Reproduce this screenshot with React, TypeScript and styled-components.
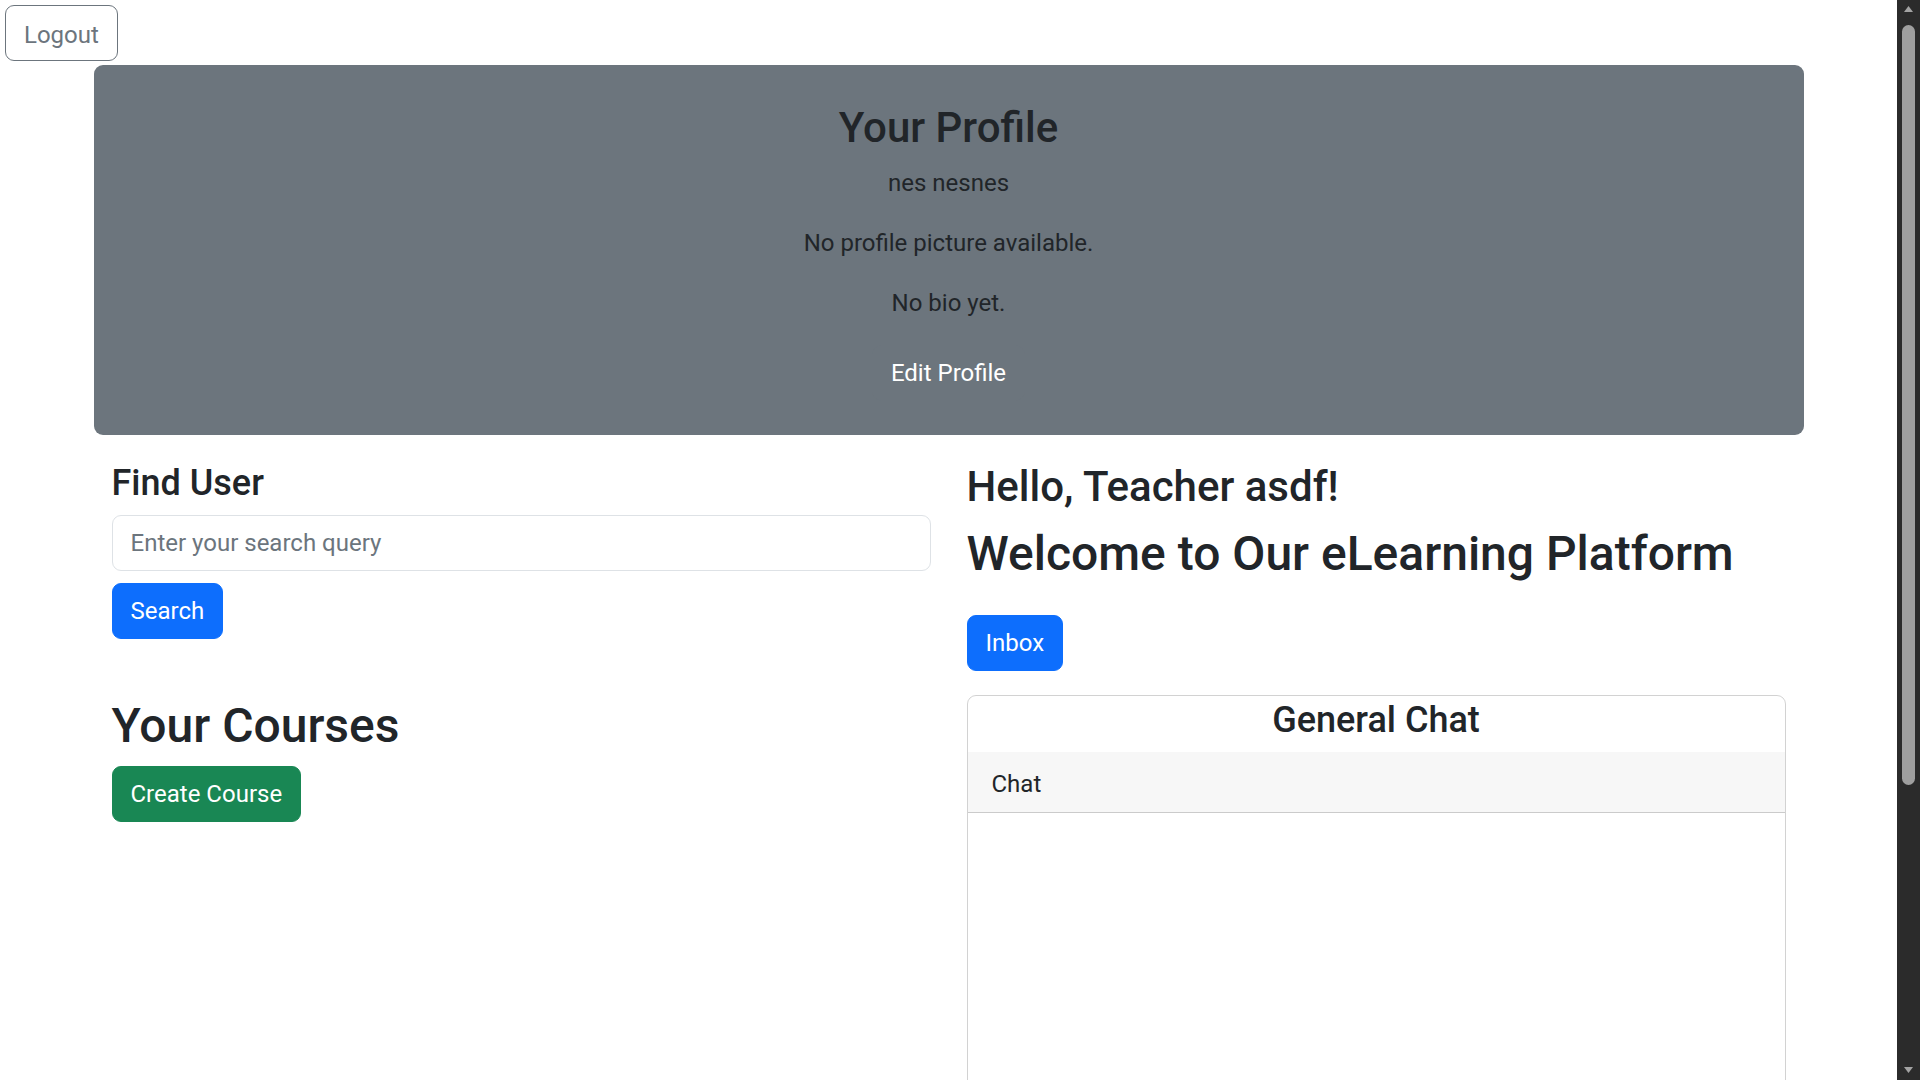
import React from 'react'
import styled, { createGlobalStyle, css } from 'styled-components'

const GlobalStyle = createGlobalStyle`
	* {
		box-sizing: border-box;
	}
	html, body {
		margin: 0;
		background: #fff;
	}
	body {
		font-family: "Segoe UI", Roboto, "Liberation Sans", Arial, sans-serif;
		font-size: 24px;
		line-height: 1.5;
		color: #212529;
	}
	::-webkit-scrollbar {
		display: none;
	}
`

const Page = styled.div`
	display: flex;
	flex-direction: column;
	width: calc(100% - 23px);
	padding-bottom: 12px;
`

const TopBar = styled.div`
	display: flex;
	padding: 5px 5px 4px;
`

const buttonBase = css`
	display: inline-flex;
	align-items: center;
	justify-content: center;
	font-family: inherit;
	font-size: 24px;
	line-height: 36px;
	padding: 9px 18px;
	border: 1px solid transparent;
	border-radius: 9px;
	cursor: pointer;
`

const OutlineButton = styled.button`
	${buttonBase};
	padding: 11px 18px 7px;
	background: transparent;
	color: #6c757d;
	border-color: #6c757d;
`

const Button = styled.button<{ $variant: 'primary' | 'success' | 'secondary' }>`
	${buttonBase};
	align-self: flex-start;
	color: #fff;
	background: ${(p) =>
		p.$variant === 'primary' ? '#0d6efd' : p.$variant === 'success' ? '#198754' : '#6c757d'};
	border-color: ${(p) =>
		p.$variant === 'primary' ? '#0d6efd' : p.$variant === 'success' ? '#198754' : '#6c757d'};
`

const ProfilePanel = styled.section`
	display: flex;
	flex-direction: column;
	align-items: center;
	width: 1710px;
	margin: 0 auto;
	padding: 38px 36px 34px;
	background: #6c757d;
	border-radius: 9px;
	text-align: center;
`

const Heading = styled.h2<{ $size: number; $gap?: number; $after?: number }>`
	margin: ${(p) => p.$gap ?? 0}px 0 ${(p) => p.$after ?? 12}px;
	font-size: ${(p) => p.$size}px;
	font-weight: 500;
	line-height: 1.2;
	color: #212529;
`

const InfoText = styled.p`
	margin: 0 0 24px;
`

const PanelButton = styled(Button)`
	align-self: center;
`

const Row = styled.div`
	display: grid;
	grid-template-columns: 1fr 1fr;
	column-gap: 36px;
	width: 1710px;
	margin: 27px auto 0;
	padding: 0 18px;
`

const Column = styled.div`
	display: flex;
	flex-direction: column;
	min-width: 0;
`

const SearchInput = styled.input`
	width: 100%;
	margin: 0 0 12px;
	padding: 9px 18px;
	font-family: inherit;
	font-size: 24px;
	line-height: 36px;
	color: #212529;
	background: #fff;
	border: 1px solid #dee2e6;
	border-radius: 9px;
	outline: none;

	&::placeholder {
		color: #6c757d;
	}
`

const InboxButton = styled(Button)`
	margin-top: 21px;
`

const ChatCard = styled.div`
	display: flex;
	flex-direction: column;
	margin-top: 24px;
	border: 1.5px solid rgba(0, 0, 0, 0.175);
	border-radius: 9px;
	overflow: hidden;
`

const CardTitle = styled(Heading)`
	text-align: center;
	padding-top: 3px;
	margin-bottom: 9px;
`

const CardHeader = styled.div`
	padding: 14px 24px 10px;
	background: #f7f7f7;
	border-bottom: 1.5px solid rgba(0, 0, 0, 0.175);
`

const CardBody = styled.div`
	height: 640px;
	padding: 24px;
`

/* drawn copy of the browser's dark scrollbar, fixed over the right edge */
const ScrollTrack = styled.div`
	position: fixed;
	top: 0;
	right: 0;
	width: 23px;
	height: 100vh;
	display: flex;
	flex-direction: column;
	align-items: center;
	background: #2b2b2b;
`

const ScrollArrow = styled.svg`
	flex: none;
	width: 23px;
	height: 22px;
`

const ScrollThumb = styled.div`
	width: 13px;
	height: 760px;
	margin-top: 3px;
	background: #9f9f9f;
	border-radius: 7px;
`

const Spacer = styled.div`
	flex: 1;
`

export default function App() {
	return (
		<Page>
			<GlobalStyle />
			<TopBar>
				<OutlineButton>Logout</OutlineButton>
			</TopBar>

			<ProfilePanel>
				<Heading as="h3" $size={42}>Your Profile</Heading>
				<InfoText>nes nesnes</InfoText>
				<InfoText>No profile picture available.</InfoText>
				<InfoText>No bio yet.</InfoText>
				<PanelButton $variant="secondary">Edit Profile</PanelButton>
			</ProfilePanel>

			<Row>
				<Column>
					<Heading as="h4" $size={36} $after={9}>Find User</Heading>
					<SearchInput placeholder="Enter your search query" />
					<Button $variant="primary">Search</Button>
					<Heading $size={48} $gap={58}>Your Courses</Heading>
					<Button $variant="success">Create Course</Button>
				</Column>

				<Column>
					<Heading as="h3" $size={42}>Hello, Teacher asdf!</Heading>
					<Heading $size={48}>Welcome to Our eLearning Platform</Heading>
					<InboxButton $variant="primary">Inbox</InboxButton>
					<ChatCard>
						<CardTitle as="h4" $size={36}>General Chat</CardTitle>
						<CardHeader>Chat</CardHeader>
						<CardBody />
					</ChatCard>
				</Column>
			</Row>

			<ScrollTrack>
				<ScrollArrow viewBox="0 0 23 22">
					<path d="M11.5 6 L16 12 L7 12 Z" fill="#a3a3a3" />
				</ScrollArrow>
				<ScrollThumb />
				<Spacer />
				<ScrollArrow viewBox="0 0 23 22">
					<path d="M11.5 15 L16 9 L7 9 Z" fill="#a3a3a3" />
				</ScrollArrow>
			</ScrollTrack>
		</Page>
	)
}
